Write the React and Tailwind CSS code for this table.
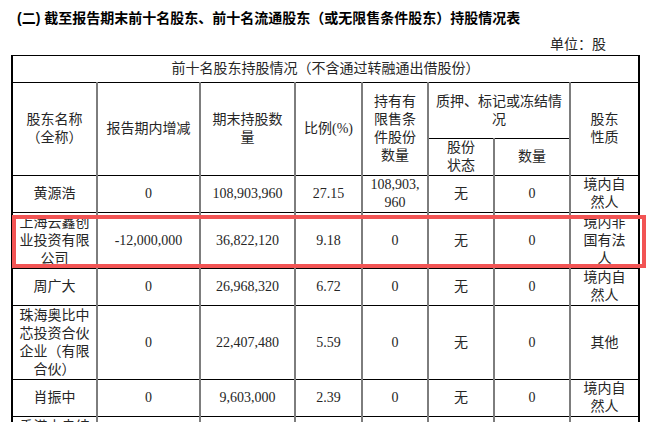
const cell =
  "border-x-2 border-x-[#7d7d7d] border-y border-y-black px-[6px] py-0 text-center align-middle"

const rows = [
  { h: "h-[37px]", name: ["黄源浩"], change: "0", total: "108,903,960", pct: "27.15", limited: ["108,903,", "960"], status: "无", qty: "0", kind: ["境内自", "然人"] },
  { h: "h-[56px]", name: ["上海云鑫创", "业投资有限", "公司"], change: "-12,000,000", total: "36,822,120", pct: "9.18", limited: ["0"], status: "无", qty: "0", kind: ["境内非", "国有法", "人"] },
  { h: "h-[36px]", name: ["周广大"], change: "0", total: "26,968,320", pct: "6.72", limited: ["0"], status: "无", qty: "0", kind: ["境内自", "然人"] },
  { h: "h-[74px]", name: ["珠海奥比中", "芯投资合伙", "企业（有限", "合伙）"], change: "0", total: "22,407,480", pct: "5.59", limited: ["0"], status: "无", qty: "0", kind: ["其他"] },
  { h: "h-[35px]", name: ["肖振中"], change: "0", total: "9,603,000", pct: "2.39", limited: ["0"], status: "无", qty: "0", kind: ["境内自", "然人"] },
  { h: "h-[38px]", name: ["香港中央结", "算有限公司"], change: "3,206,455", total: "8,731,620", pct: "2.18", limited: ["0"], status: "无", qty: "0", kind: ["其他"] },
]

function Lines({ items }) {
  return items.map((t, i) => (
    <span key={i} className="block">
      {t}
    </span>
  ))
}

export default function App() {
  return (
    <div
      className="relative w-[653px] h-[422px] overflow-hidden bg-white text-[#262626]"
      style={{ fontFamily: '"Liberation Serif", "Noto Sans CJK SC", serif' }}
    >
      <div
        className="pl-[17px] pt-[8px] h-[36px] text-[14px] font-bold leading-[20px] text-black"
        style={{ fontFamily: '"Liberation Sans", "Noto Sans CJK SC", sans-serif' }}
      >
        (二) 截至报告期末前十名股东、前十名流通股东（或无限售条件股东）持股情况表
      </div>
      <div className="h-[19px] flex justify-end pr-[47px] text-[14px] leading-[18px]">
        单位：股
      </div>

      <table className="ml-[11px] w-[627px] table-fixed border-collapse text-[14px] leading-[18px]">
        <colgroup>
          <col className="w-[85px]" />
          <col className="w-[103px]" />
          <col className="w-[95px]" />
          <col className="w-[67px]" />
          <col className="w-[66px]" />
          <col className="w-[66px]" />
          <col className="w-[76px]" />
          <col className="w-[69px]" />
        </colgroup>
        <tbody>
          <tr className="h-[27px]">
            <td colSpan={8} className={cell + " border-x-black"}>
              前十名股东持股情况（不含通过转融通出借股份）
            </td>
          </tr>
          <tr className="h-[56px]">
            <td rowSpan={2} className={cell + " border-l-black"}>
              <Lines items={["股东名称", "（全称）"]} />
            </td>
            <td rowSpan={2} className={cell}>报告期内增减</td>
            <td rowSpan={2} className={cell}>
              <Lines items={["期末持股数", "量"]} />
            </td>
            <td rowSpan={2} className={cell + " px-0"}>比例(%)</td>
            <td rowSpan={2} className={cell}>
              <Lines items={["持有有", "限售条", "件股份", "数量"]} />
            </td>
            <td colSpan={2} className={cell}>
              <Lines items={["质押、标记或冻结情", "况"]} />
            </td>
            <td rowSpan={2} className={cell + " border-r-black"}>
              <Lines items={["股东", "性质"]} />
            </td>
          </tr>
          <tr className="h-[37px]">
            <td className={cell}>
              <Lines items={["股份", "状态"]} />
            </td>
            <td className={cell}>数量</td>
          </tr>
          {rows.map((r, i) => (
            <tr key={i} className={r.h}>
              <td className={cell + " border-l-black"}>
                <Lines items={r.name} />
              </td>
              <td className={cell}>{r.change}</td>
              <td className={cell}>{r.total}</td>
              <td className={cell}>{r.pct}</td>
              <td className={cell}>
                <Lines items={r.limited} />
              </td>
              <td className={cell}>{r.status}</td>
              <td className={cell}>{r.qty}</td>
              <td className={cell + " border-r-black"}>
                <Lines items={r.kind} />
              </td>
            </tr>
          ))}
        </tbody>
      </table>

      <div className="absolute left-[12px] top-[215px] w-[634px] h-[53px] border-4 border-[#f25454] pointer-events-none" />
    </div>
  )
}
